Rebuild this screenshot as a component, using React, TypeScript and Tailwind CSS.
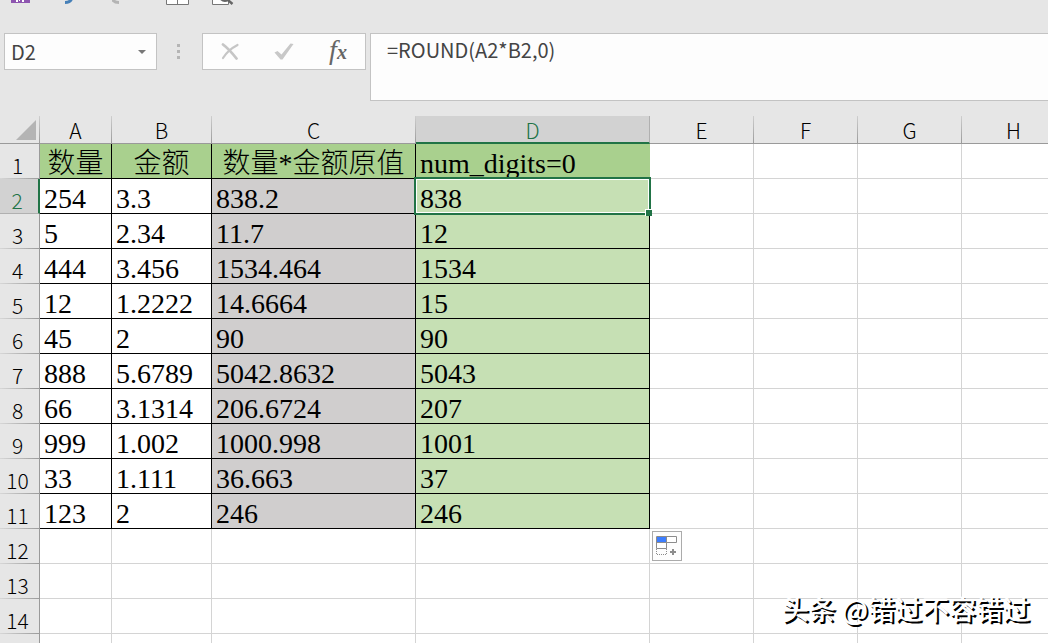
import clsx from "clsx";

const columns = ["A", "B", "C", "D", "E", "F", "G", "H"];

const rows: string[][] = [
  ["数量", "金额", "数量*金额原值", "num_digits=0"],
  ["254", "3.3", "838.2", "838"],
  ["5", "2.34", "11.7", "12"],
  ["444", "3.456", "1534.464", "1534"],
  ["12", "1.2222", "14.6664", "15"],
  ["45", "2", "90", "90"],
  ["888", "5.6789", "5042.8632", "5043"],
  ["66", "3.1314", "206.6724", "207"],
  ["999", "1.002", "1000.998", "1001"],
  ["33", "1.111", "36.663", "37"],
  ["123", "2", "246", "246"],
  [],
  [],
  [],
];

const LAST_DATA_ROW = 10;

function QuickAccessBar() {
  return (
    <div className="flex h-[33px] items-start pl-[11px]">
      <button type="button" aria-label="Save" className="mr-[34px]">
        <svg width="19" height="6" viewBox="0 0 19 6" className="block">
          <path d="M0 0h19v3H0z" fill="#8e56b0" />
          <path d="M5 0h2v2H5zM8 0h1v1H8zM11 0h2v2h-2z" fill="#fff" />
        </svg>
      </button>
      <button type="button" aria-label="Undo" className="mr-[38px]">
        <svg width="10" height="6" viewBox="0 0 10 6" className="block">
          <path d="M1 2.5C4.5 2.5 6.5 1.5 7.5 -1" fill="none" stroke="#4680b8" strokeWidth="3" />
        </svg>
      </button>
      <button type="button" aria-label="Redo" className="mr-[45px]">
        <svg width="9" height="6" viewBox="0 0 9 6" className="block">
          <path d="M7 2.5C4 2.5 1.5 1.5 0 -1" fill="none" stroke="#b4b4b4" strokeWidth="3" />
        </svg>
      </button>
      <button type="button" aria-label="Split" className="mr-[23px]">
        <svg width="23" height="6" viewBox="0 0 23 6" className="block">
          <path d="M.5 -1V4.5H22.5V-1M11.5 -1V4" fill="#fff" stroke="#777" />
        </svg>
      </button>
      <button type="button" aria-label="Print preview">
        <svg width="22" height="6" viewBox="0 0 22 6" className="block">
          <path d="M.5 -1V4.5H16.5V-1" fill="#fff" stroke="#777" />
          <path d="M9 -1Q12 2 16 0L20.5 4" fill="none" stroke="#666" strokeWidth="2.4" />
        </svg>
      </button>
    </div>
  );
}

function FormulaBar() {
  return (
    <div className="flex items-start pl-1 font-['Noto_Sans_CJK_SC',sans-serif] text-xl text-[#444]">
      <div className="flex h-[37px] w-[153px] items-center border border-[#c3c3c3] bg-[#fdfdfd]">
        <input
          aria-label="Name box"
          defaultValue="D2"
          className="min-w-0 flex-1 bg-transparent pl-1.5 outline-none"
        />
        <button type="button" aria-label="Open name list" className="px-2.5">
          <svg width="8" height="4" viewBox="0 0 8 4">
            <path d="M0 0h8L4 4z" fill="#777" />
          </svg>
        </button>
      </div>
      <div className="flex h-[37px] w-[45px] flex-col items-center justify-center gap-[3px] pr-0.5">
        <span className="size-[3px] bg-[#b5b5b5]" />
        <span className="size-[3px] bg-[#b5b5b5]" />
        <span className="size-[3px] bg-[#b5b5b5]" />
      </div>
      <div className="mr-1 flex h-[37px] w-[164px] items-center border border-[#c3c3c3] bg-[#fdfdfd]">
        <button type="button" aria-label="Cancel" className="flex flex-1 justify-center">
          <svg width="18" height="17" viewBox="0 0 18 17">
            <path d="M2 1.5Q8 6 15.5 15.5" fill="none" stroke="#c6c6c6" strokeWidth="2.8" strokeLinecap="round" />
            <path d="M2 15Q7 7 16.5 2" fill="none" stroke="#c6c6c6" strokeWidth="2.2" strokeLinecap="round" />
          </svg>
        </button>
        <button type="button" aria-label="Enter" className="flex flex-1 justify-center">
          <svg width="20" height="17" viewBox="0 0 20 17">
            <path d="M.5 9.5L3.5 8L7.5 11.5L16.5 .5L19.5 1L8.5 16.5H6.5Z" fill="#c8c8c8" />
          </svg>
        </button>
        <button
          type="button"
          aria-label="Insert function"
          className="flex-1 pb-1 font-['Liberation_Serif'] text-[28px] leading-8 text-[#666] italic"
        >
          f<span className="text-xl font-bold">x</span>
        </button>
      </div>
      <textarea
        aria-label="Formula"
        defaultValue="=ROUND(A2*B2,0)"
        className="h-[68px] flex-1 resize-none border border-r-0 border-[#c3c3c3] bg-[#fdfdfd] px-4 pt-0.5 outline-none"
      />
    </div>
  );
}

function Selection() {
  return (
    <div className="pointer-events-none absolute -inset-x-0.5 -top-0.5 -bottom-0.5 z-10 border-2 border-[#217346]">
      <div className="h-full border border-white" />
      <span className="absolute -right-[3px] -bottom-[3px] size-[7px] border-t border-l border-white bg-[#217346]" />
    </div>
  );
}

function FillOptions() {
  return (
    <button
      type="button"
      aria-label="Auto fill options"
      className="absolute top-0.5 left-0.5 z-10 flex size-[30px] items-center justify-center border border-[#ababab] bg-[#fdfdfd]"
    >
      <svg width="22" height="20" viewBox="0 0 22 20">
        <path d="M.5 .5h20v6h-10v6H.5z" fill="#fff" stroke="#8c8c8c" />
        <path d="M1 1h9v5H1z" fill="#3d7eff" />
        <path d="M.5 6.5h10V.5M10.5 6.5v6" fill="none" stroke="#8c8c8c" />
        <path d="M.5 13v5.5h10v-5.5" fill="none" stroke="#8c8c8c" strokeDasharray="1 1" />
        <path d="M14 16h6M17 13v6" stroke="#8c8c8c" strokeWidth="2" />
      </svg>
    </button>
  );
}

function Cell({ row, col }: { row: number; col: number }) {
  const filled = row <= LAST_DATA_ROW && col < 4;
  const selected = row === 1 && col === 3;

  return (
    <td
      className={clsx(
        "relative h-[35px] border-r border-b p-0 whitespace-nowrap",
        filled ? "border-black" : "border-[#d4d4d4]",
        filled && row === 0 && "bg-[#a9d08e]",
        filled && row === 0 && col === 3 && "border-r-[#a9d08e]",
        filled && row > 0 && col === 2 && "bg-[#d0cece]",
        filled && row > 0 && col === 3 && "bg-[#c6e0b4]",
        row === 0 && col < 3 ? "text-center" : "pl-1",
      )}
    >
      <div className="pt-1.5 leading-[28px]">{rows[row][col]}</div>
      {selected && <Selection />}
      {row === LAST_DATA_ROW + 1 && col === 4 && <FillOptions />}
    </td>
  );
}

function Sheet() {
  return (
    <table className="w-[1066px] table-fixed border-separate border-spacing-0 bg-white font-['Liberation_Serif','Noto_Sans_CJK_SC',serif] text-[28px] font-light text-black">
      <colgroup>
        <col className="w-[40px]" />
        <col className="w-[72px]" />
        <col className="w-[100px]" />
        <col className="w-[204px]" />
        <col className="w-[234px]" />
        <col className="w-[104px]" />
        <col className="w-[104px]" />
        <col className="w-[104px]" />
        <col className="w-[104px]" />
      </colgroup>
      <thead>
        <tr className="bg-[#e6e6e6] font-['Noto_Sans_CJK_SC',sans-serif] text-[21px] leading-6">
          <th
            aria-label="Select all"
            className="h-[28px] border-r border-b p-0 [border-image:linear-gradient(to_bottom,#d0d0d0,#999)_1]"
          >
            <svg width="20" height="20" viewBox="0 0 20 20" className="mr-[3px] ml-auto block">
              <path d="M20 0V20H0z" fill="#b4b4b4" />
            </svg>
          </th>
          {columns.map((name) => (
            <th
              key={name}
              scope="col"
              className={clsx(
                "h-[28px] p-0 font-light",
                name === "D"
                  ? "border-r border-b-2 border-r-[#b0b0b0] border-b-[#217346] bg-[#d2d2d2] pt-0.5 text-[#217346]"
                  : "border-r border-b [border-image:linear-gradient(to_bottom,#d0d0d0,#999)_1]",
              )}
            >
              {name}
            </th>
          ))}
        </tr>
      </thead>
      <tbody>
        {rows.map((_, row) => (
          <tr key={row}>
            <th
              scope="row"
              className={clsx(
                "h-[35px] p-0 pt-2 pr-1 font-['Noto_Sans_CJK_SC',sans-serif] text-[21px] leading-6 font-light",
                row === 1
                  ? "border-r-2 border-b border-r-[#217346] border-b-[#b0b0b0] bg-[#d2d2d2] text-[#217346]"
                  : "border-r border-b bg-[#e6e6e6] [border-image:linear-gradient(to_right,#d8d8d8,#999)_1]",
              )}
            >
              {row + 1}
            </th>
            {columns.map((name, col) => (
              <Cell key={name} row={row} col={col} />
            ))}
          </tr>
        ))}
        {/* sliver of the next row under the fold */}
        <tr aria-hidden="true">
          <td className="h-[35px] border-r border-[#999] bg-[#e6e6e6]" />
          {columns.map((name) => (
            <td key={name} className="h-[35px] border-r border-[#d4d4d4]" />
          ))}
        </tr>
      </tbody>
    </table>
  );
}

export default function App() {
  return (
    <main className="relative h-screen overflow-hidden bg-[#e6e6e6]">
      <QuickAccessBar />
      <FormulaBar />
      <div className="mt-[15px] overflow-hidden">
        <Sheet />
      </div>
      <p className="absolute right-[18px] bottom-3.5 z-20 font-['Noto_Sans_CJK_SC',sans-serif] text-[27px] leading-10 font-medium text-white [text-shadow:2px_2px_0_#000]">
        头条 @错过不容错过
      </p>
    </main>
  );
}
